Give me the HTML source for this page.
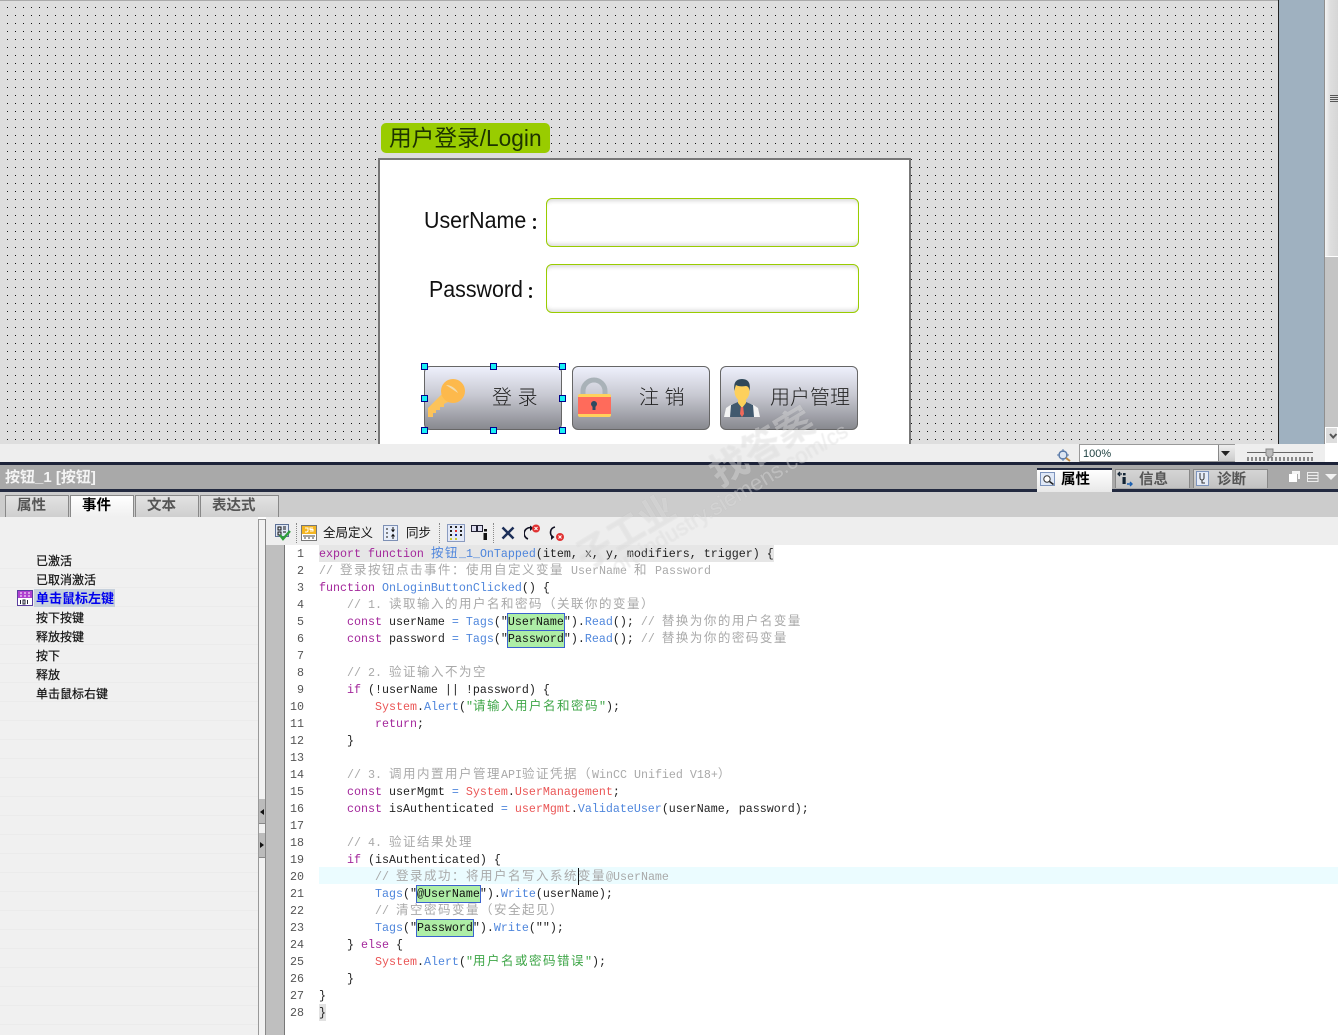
<!DOCTYPE html>
<html><head><meta charset="utf-8"><style>
html,body{margin:0;padding:0;background:#fff}
#p{position:relative;width:1338px;height:1035px;overflow:hidden;background:#fff;font-family:"Liberation Sans","Noto Sans CJK SC",sans-serif}
#p div,#p svg,#p span.a{position:absolute}
.h{width:5px;height:5px;background:#19f0f5;border:1px solid #00008b;z-index:3}
.inp{left:546px;width:311px;height:47px;border:1px solid #99cc00;border-radius:6px;background:#fff;box-shadow:inset 0 5px 4px -3px #d8d8d8,inset 0 -5px 4px -3px #d8d8d8}
.btn{top:366px;width:136px;height:62px;border:1px solid #666;border-radius:6px;background:linear-gradient(#eef0fc,#c8c9d2 45%,#88898f)}
.bt{font-size:20px;line-height:24px;color:#222;white-space:pre;top:386px;font-weight:300}
.tab{top:495px;height:21px;background:linear-gradient(#e2e2e2,#cfcfcf);border:1px solid #888;border-bottom:0;font-size:14.5px;font-weight:700;color:#555;line-height:20px;text-align:left;padding-left:11px;box-sizing:content-box}
.rt{top:469px;height:19px;width:75px;background:linear-gradient(#d5d5d5,#c2c2c2);border:1px solid #888;border-bottom:0;box-sizing:border-box;font-size:14.5px;font-weight:700;color:#555;line-height:20px;padding-left:23px}
.ev{left:36px;font-size:12px;line-height:16px;color:#111;white-space:pre;-webkit-text-stroke:.2px #111}
.tb{font-size:12.5px;color:#111;line-height:16px;white-space:pre;top:525px}
.sep{width:0;top:523px;height:20px;border-left:1px dotted #888}
#code{left:319px;top:546px;font-family:"Liberation Mono","Noto Sans CJK SC",monospace;font-size:11.667px;color:#222}
#code .l{position:absolute;left:0;height:17px;line-height:17px;white-space:pre}
#code i{font-style:normal;font-family:"Noto Sans CJK SC",sans-serif;font-size:12.5px;letter-spacing:1.5px;line-height:0}
.k{color:#a3279b}.c{color:#a9a9a9}.b{color:#4f86dc}.r{color:#ea5656}.g{color:#3fa648}
.t{background:#aeeea6;outline:1px solid #3a62cf;outline-offset:0;color:#111;padding:1px 0}
#nums{left:285px;top:546px;width:19px;font-family:"Liberation Mono",monospace;font-size:11.667px;color:#555;line-height:17px;text-align:right;white-space:pre}
.wm{color:rgba(255,255,255,.3);text-shadow:0 0 1px rgba(140,140,140,.22);white-space:pre;transform:rotate(-31deg);transform-origin:0 100%;z-index:9;pointer-events:none}
.lb{font-size:23px;line-height:30px;color:#111;white-space:pre;transform:scaleX(.93);transform-origin:0 50%}
</style></head><body><div id="p">

<!-- canvas -->
<svg style="left:0;top:0" width="1278" height="444"><defs><pattern id="d" width="8" height="8" patternUnits="userSpaceOnUse"><rect x="7" y="7" width="1" height="1" fill="#111"/></pattern></defs><rect width="1278" height="444" fill="#dedede"/><rect width="1278" height="444" fill="url(#d)"/><rect width="1278" height="1" fill="#aaa"/></svg>
<div style="left:1278px;top:0;width:1px;height:444px;background:#222"></div>
<div style="left:1279px;top:0;width:45px;height:444px;background:#9fb1c0"></div>
<div style="left:1324px;top:0;width:1px;height:444px;background:#8f8f8f"></div>
<div style="left:1325px;top:0;width:13px;height:444px;background:#c4c4c4"></div>
<div style="left:1325px;top:0;width:13px;height:257px;background:linear-gradient(90deg,#f4f4f4,#dedede 40%,#d6d6d6);border-bottom:1px solid #fff;box-sizing:border-box"></div>
<div style="left:1330px;top:95px;width:8px;height:1px;background:#555;box-shadow:0 2px #555,0 4px #555,0 6px #555"></div>
<div style="left:1325px;top:427px;width:13px;height:17px;background:#ddd;border:1px solid #fff;box-sizing:border-box"></div>
<svg style="left:1329px;top:432px" width="9" height="8"><path d="M1 2 L4.2 5.5 L7.5 2" fill="none" stroke="#555" stroke-width="2"/></svg>

<!-- dialog -->
<div style="left:381px;top:123px;width:169px;height:30px;background:#99cc00;border-radius:5px"></div>
<div style="left:389px;top:123px;font-size:22.7px;line-height:30px;color:#1d3300;white-space:pre">用户登录/Login</div>
<div style="left:378px;top:158px;width:529px;height:290px;background:#fff;border:2px solid #777"></div>
<div class="lb" style="left:424px;top:205px">UserName</div>
<div class="lb" style="left:429px;top:274px">Password</div>
<div style="left:533px;top:218px;width:3px;height:3px;background:#111;border-radius:50%;box-shadow:0 8px #111"></div>
<div style="left:529px;top:287px;width:3px;height:3px;background:#111;border-radius:50%;box-shadow:0 8px #111"></div>
<div class="inp" style="top:198px"></div>
<div class="inp" style="top:264px"></div>

<div class="btn" style="left:424px"></div>
<div class="btn" style="left:572px"></div>
<div class="btn" style="left:720px"></div>
<div class="bt" style="left:492px">登 录</div>
<div class="bt" style="left:639px">注 销</div>
<div class="bt" style="left:770px">用户管理</div>

<!-- key -->
<svg style="left:425px;top:377px" width="44" height="42" viewBox="0 0 44 42"><path d="M3 40 V31 L19 15 L27 23 L19 27 V30 H15 V33 H11 V36 H8 V40 Z" fill="#fcc35a"/><circle cx="28" cy="14" r="12" fill="#fdb94c"/><path d="M21 8 A9 5 35 0 1 33 16 Z" fill="#f2dcae"/></svg>
<!-- lock -->
<svg style="left:576px;top:377px" width="36" height="42" viewBox="0 0 36 42"><path d="M7 18 V14 A11 11 0 0 1 29 14 V18" fill="none" stroke="#a9b2b8" stroke-width="5"/><rect x="2" y="17" width="33" height="23" rx="2" fill="#ffd15c"/><rect x="2" y="20" width="33" height="17" fill="#ff6b5b"/><circle cx="18" cy="27" r="3" fill="#2d4a60"/><rect x="16.5" y="27" width="3" height="6" fill="#2d4a60"/></svg>
<!-- person -->
<svg style="left:724px;top:378px" width="36" height="40" viewBox="0 0 36 40"><path d="M0 39 L2 30 L8 26 L28 26 L34 30 L36 39 Z" fill="#f4f4f4"/><path d="M6 39 L7 27 L14 24 L18 30 L22 24 L29 27 L30 39 Z" fill="#41596e"/><path d="M14 20 H22 V25 L18 30 L14 25 Z" fill="#fcd05a"/><path d="M16.8 29 H19.200 L20 36 L18 39 L16 36 Z" fill="#f0695a"/><ellipse cx="18" cy="13" rx="7.500" ry="10" fill="#fdd05c"/><path d="M10.500 13 Q8.500 1 18 1 Q27.500 1 25.500 13 Q25 8 22 8 Q15 9 12 7 Q11 9 10.500 13Z" fill="#2f4859"/></svg>

<div class="h" style="left:421px;top:363px"></div><div class="h" style="left:490px;top:363px"></div><div class="h" style="left:559px;top:363px"></div>
<div class="h" style="left:421px;top:395px"></div><div class="h" style="left:559px;top:395px"></div>
<div class="h" style="left:421px;top:427px"></div><div class="h" style="left:490px;top:427px"></div><div class="h" style="left:559px;top:427px"></div>

<!-- status bar -->
<div style="left:0;top:444px;width:1325px;height:18px;background:#eee"></div>
<svg style="left:1056px;top:448px" width="16" height="15"><circle cx="7" cy="7" r="4" fill="#dde6f2" stroke="#5a7aa8" stroke-width="1.4"/><path d="M7 1v3M7 10v3M1 7h3M10 7h3" stroke="#5a7aa8"/><path d="M10 10l4 3" stroke="#c08a40" stroke-width="2"/></svg>
<div style="left:1079px;top:444px;width:156px;height:18px;background:#fff;border:1px solid #999;box-sizing:border-box;font-size:11px;line-height:18px;padding-left:3px;color:#244"><span>100%</span></div>
<div style="left:1218px;top:445px;width:16px;height:16px;background:linear-gradient(#eee,#ccc);border-left:1px solid #888"></div>
<svg style="left:1221px;top:451px" width="10" height="5"><path d="M0 0H9L4.5 5Z" fill="#222"/></svg>
<div style="left:1247px;top:452px;width:66px;height:1px;background:#666"></div>
<svg style="left:1247px;top:448px" width="68" height="14"><path d="M1 9v4M5 9v4M9 9v4M13 9v4M17 9v4M21 9v4M25 9v4M29 9v4M33 9v4M37 9v4M41 9v4M45 9v4M49 9v4M53 9v4M57 9v4M61 9v4M65 9v4" stroke="#222" stroke-width="1"/><path d="M19 1H26V7L22.5 10L19 7Z" fill="#bbb" stroke="#888"/></svg>

<!-- properties header -->
<div style="left:0;top:462px;width:1338px;height:3px;background:#1c2238"></div>
<div style="left:0;top:465px;width:1338px;height:24px;background:#a9a9a9"></div>
<div style="left:0;top:489px;width:1338px;height:3px;background:#232a40"></div>
<div style="left:0;top:492px;width:1338px;height:25px;background:#cccccc"></div>
<div style="left:5px;top:466px;font-size:15px;font-weight:700;line-height:24px;color:#f4f4f4;white-space:pre">按钮_1 [按钮]</div>

<div class="rt" style="left:1037px;top:468px;height:24px;padding-left:24px;background:linear-gradient(#fff,#e8e8e8);border:0;border-top:2px solid #232a40;color:#000">属性</div>
<div class="rt" style="left:1115px">信息</div>
<div class="rt" style="left:1193px">诊断</div>
<svg style="left:1040px;top:472px" width="16" height="15"><rect x="0.5" y="0.5" width="14" height="13" fill="#dfe8f7" stroke="#7d94bd"/><circle cx="7" cy="7" r="3.2" fill="#fff" stroke="#333"/><path d="M9.5 9.5l4 3" stroke="#222" stroke-width="1.6"/></svg>
<svg style="left:1117px;top:471px" width="17" height="16"><path d="M1 3h4M3 1l-2 2 2 2" fill="none" stroke="#123" stroke-width="1.3"/><rect x="6" y="2" width="2.6" height="2.4" fill="#123"/><rect x="5.5" y="6" width="3.2" height="7" fill="#123"/><path d="M10 13h5M13 11l2 2-2 2" fill="none" stroke="#1a5fb0" stroke-width="1.4"/></svg>
<svg style="left:1196px;top:471px" width="15" height="16"><rect x="0.5" y="0.5" width="12" height="14" fill="#e6ecf8" stroke="#7d94bd"/><path d="M4 2v5a2 2 0 0 0 4 0V2M6 9v3h3" fill="none" stroke="#333"/></svg>
<svg style="left:1288px;top:471px" width="50" height="13"><path d="M4 0H12V8H10V3H4Z" fill="#f4f4f4"/><rect x="1" y="3" width="8" height="8" fill="#fff"/><path d="M19.5 1.5H30V10.5H19.5ZM19.5 4.5H30M19.5 7.5H30" fill="none" stroke="#eee"/><path d="M37 3H49L43 9Z" fill="#f2f2f2"/></svg>

<div class="tab" style="left:5px;width:51px">属性</div>
<div class="tab" style="left:70px;width:51px;background:linear-gradient(#fff,#efefef);color:#000;height:22px">事件</div>
<div class="tab" style="left:135px;width:51px">文本</div>
<div class="tab" style="left:200px;width:66px">表达式</div>

<!-- left panel -->
<div style="left:0;top:517px;width:258px;height:518px;background:#f0f0f0"></div>
<div style="left:0;top:550px;width:258px;height:485px;background:repeating-linear-gradient(#f0f0f0 0 18px,#ebebeb 18px 19px)"></div>
<div class="ev" style="top:553px">已激活</div>
<div class="ev" style="top:572px">已取消激活</div>
<div style="left:34px;top:589px;width:81px;height:18px;background:#c6d0dc"></div>
<div class="ev" style="top:591px;font-size:13px;color:#0000ee;font-weight:700;-webkit-text-stroke:0">单击鼠标左键</div>
<div class="ev" style="top:610px">按下按键</div>
<div class="ev" style="top:629px">释放按键</div>
<div class="ev" style="top:648px">按下</div>
<div class="ev" style="top:667px">释放</div>
<div class="ev" style="top:686px">单击鼠标右键</div>
<svg style="left:17px;top:590px" width="16" height="16"><rect x="0.5" y="0.5" width="15" height="15" fill="#fff" stroke="#5a3fa0"/><rect x="1" y="1" width="14" height="7" fill="#b040d0"/><path d="M3 3h2M7 3h2M11 3h2M3 6h2M7 6h2M11 6h2" stroke="#fff"/><path d="M3.500 10v4M6 10h2v4H6zM10.500 10v4" fill="none" stroke="#223"/></svg>

<!-- splitter + gutter -->
<div style="left:258px;top:519px;width:1px;height:516px;background:#999"></div>
<div style="left:259px;top:519px;width:6px;height:516px;background:#f2f2f2;border-top:1px solid #999;box-sizing:border-box"></div>
<div style="left:265px;top:519px;width:1px;height:516px;background:#888"></div>
<div style="left:259px;top:799px;width:6px;height:24px;background:#bbb;border-bottom:1px solid #888"></div>
<div style="left:259px;top:833px;width:6px;height:24px;background:#bbb;border-bottom:1px solid #888"></div>
<svg style="left:259px;top:808px" width="6" height="8"><path d="M1 4L5 1V7Z" fill="#111"/></svg>
<svg style="left:259px;top:841px" width="6" height="8"><path d="M5 4L1 1V7Z" fill="#111"/></svg>

<div style="left:266px;top:517px;width:1072px;height:28px;background:#eeeeee"></div>
<div style="left:266px;top:545px;width:18px;height:490px;background:#bfbfbf"></div>
<div style="left:284px;top:545px;width:1px;height:490px;background:#777"></div>

<!-- toolbar -->
<div class="sep" style="left:296px"></div><div class="sep" style="left:439px"></div><div class="sep" style="left:493px"></div>
<svg style="left:275px;top:524px" width="17" height="17"><rect x="0.500" y="0.500" width="13" height="12" fill="#dfe7f5" stroke="#5b6f95"/><path d="M3 3h3v3H3zM3 8h3v3H3zM8 3h3M8 5h3M8 8h3" fill="none" stroke="#111"/><path d="M5 11l3 4 7-8" fill="none" stroke="#2e9e3a" stroke-width="2.4"/></svg>
<svg style="left:301px;top:525px" width="16" height="16"><rect x="0.500" y="0.500" width="15" height="15" fill="#fff" stroke="#777"/><rect x="1" y="1" width="14" height="8" fill="#f4b622"/><path d="M4 3h3v3l-1 1H4M9 6h3V4.500H9V3h3" fill="none" stroke="#fff"/><path d="M2 11h12M3 13h2M7 13h2M11 13h2" stroke="#444"/></svg>
<div class="tb" style="left:323px">全局定义</div>
<svg style="left:383px;top:525px" width="15" height="16"><rect x="0.500" y="0.500" width="14" height="15" fill="#e8eef9" stroke="#7d90b5"/><path d="M3 4h2M3 8h2M3 12h2M10 2v4M8.500 4.500l1.500 2 1.500-2M10 14v-4M8.500 11.500l1.500-2 1.500 2" fill="none" stroke="#111"/></svg>
<div class="tb" style="left:406px">同步</div>
<svg style="left:447px;top:524px" width="18" height="18"><rect x="0.500" y="0.500" width="17" height="17" fill="#e3e9f7" stroke="#8a9bc0"/><path d="M3 3h2M8 3h2M13 3h2M3 7h2M13 7h2M3 11h2M13 11h2" stroke="#222" stroke-width="2"/><path d="M8 7h2" stroke="#d33" stroke-width="2"/><path d="M8 11h2" stroke="#23a" stroke-width="2"/><path d="M3 15h2M8 15h2" stroke="#cc3" stroke-width="2"/></svg>
<svg style="left:471px;top:524px" width="17" height="17"><rect x="0.500" y="1.500" width="5" height="6" fill="#dde" stroke="#223"/><rect x="6.500" y="1.500" width="5" height="6" fill="#dde" stroke="#223"/><rect x="13" y="5" width="3" height="2.500" fill="#111"/><rect x="12.500" y="9" width="3.500" height="7" fill="#111"/></svg>
<svg style="left:501px;top:526px" width="14" height="14"><path d="M1.500 1.500L12.500 12.500M12.500 1.500L1.500 12.500" stroke="#1c2f58" stroke-width="2.500"/></svg>
<svg style="left:524px;top:524px" width="17" height="17"><path d="M8 4A5.500 5.500 0 0 0 4 15" fill="none" stroke="#112" stroke-width="1.600"/><path d="M6 1.500L9.500 4L6 7Z" fill="#112"/><circle cx="12" cy="4.500" r="4" fill="#e03131"/><path d="M10.500 3l3 3M13.500 3l-3 3" stroke="#fff"/></svg>
<svg style="left:548px;top:525px" width="17" height="17"><path d="M7 2A5.500 5.500 0 0 0 5 12" fill="none" stroke="#112" stroke-width="1.600"/><path d="M3 9.500L6.500 12L3 15Z" fill="#112"/><circle cx="12" cy="12" r="4" fill="#e03131"/><path d="M10.500 10.500l3 3M13.500 10.500l-3 3" stroke="#fff"/></svg>

<!-- code -->
<div style="left:319px;top:545px;width:455px;height:17px;background:#e6e6e6"></div>
<div style="left:319px;top:867px;width:1019px;height:17px;background:#ebfcff"></div>
<div style="left:319px;top:1004px;width:7px;height:17px;background:#e2e2e2"></div>
<div style="left:578px;top:868px;width:1px;height:17px;background:#111;z-index:5"></div>
<div id="nums">1
2
3
4
5
6
7
8
9
10
11
12
13
14
15
16
17
18
19
20
21
22
23
24
25
26
27
28</div>
<div id="code">
<div class="l" style="top:0"><span class="k">export function</span> <span class="b"><i>按钮</i>_1_OnTapped</span>(item, x, y, modifiers, trigger) {</div>
<div class="l c" style="top:17px">// <i>登录按钮点击事件：使用自定义变量</i> UserName <i>和</i> Password</div>
<div class="l" style="top:34px"><span class="k">function</span> <span class="b">OnLoginButtonClicked</span>() {</div>
<div class="l c" style="top:51px">    // 1. <i>读取输入的用户名和密码（关联你的变量）</i></div>
<div class="l" style="top:68px">    <span class="k">const</span> userName <span class="b">=</span> <span class="b">Tags</span>("<span class="t">UserName</span>").<span class="b">Read</span>(); <span class="c">// <i>替换为你的用户名变量</i></span></div>
<div class="l" style="top:85px">    <span class="k">const</span> password <span class="b">=</span> <span class="b">Tags</span>("<span class="t">Password</span>").<span class="b">Read</span>(); <span class="c">// <i>替换为你的密码变量</i></span></div>
<div class="l c" style="top:119px">    // 2. <i>验证输入不为空</i></div>
<div class="l" style="top:136px">    <span class="k">if</span> (!userName || !password) {</div>
<div class="l" style="top:153px">        <span class="r">System</span>.<span class="b">Alert</span>(<span class="g">"<i>请输入用户名和密码</i>"</span>);</div>
<div class="l" style="top:170px">        <span class="k">return</span>;</div>
<div class="l" style="top:187px">    }</div>
<div class="l c" style="top:221px">    // 3. <i>调用内置用户管理</i>API<i>验证凭据（</i>WinCC Unified V18+<i>）</i></div>
<div class="l" style="top:238px">    <span class="k">const</span> userMgmt <span class="b">=</span> <span class="r">System</span>.<span class="r">UserManagement</span>;</div>
<div class="l" style="top:255px">    <span class="k">const</span> isAuthenticated <span class="b">=</span> <span class="r">userMgmt</span>.<span class="b">ValidateUser</span>(userName, password);</div>
<div class="l c" style="top:289px">    // 4. <i>验证结果处理</i></div>
<div class="l" style="top:306px">    <span class="k">if</span> (isAuthenticated) {</div>
<div class="l c" style="top:323px">        // <i>登录成功：将用户名写入系统变量</i>@UserName</div>
<div class="l" style="top:340px">        <span class="b">Tags</span>("<span class="t">@UserName</span>").<span class="b">Write</span>(userName);</div>
<div class="l c" style="top:357px">        // <i>清空密码变量（安全起见）</i></div>
<div class="l" style="top:374px">        <span class="b">Tags</span>("<span class="t">Password</span>").<span class="b">Write</span>("");</div>
<div class="l" style="top:391px">    } <span class="k">else</span> {</div>
<div class="l" style="top:408px">        <span class="r">System</span>.<span class="b">Alert</span>(<span class="g">"<i>用户名或密码错误</i>"</span>);</div>
<div class="l" style="top:425px">    }</div>
<div class="l" style="top:442px">}</div>
<div class="l" style="top:459px">}</div>
</div>

<!-- watermark -->
<div class="wm" style="left:725px;top:452px;font-size:38px;line-height:44px;font-weight:700">找答案</div>
<div class="wm" style="left:591px;top:535px;font-size:36px;line-height:44px;font-weight:700">子工业</div>
<div class="wm" style="left:620px;top:555px;font-size:22px;line-height:24px">ort.industry.siemens.com/cs</div>
</div></body></html>
